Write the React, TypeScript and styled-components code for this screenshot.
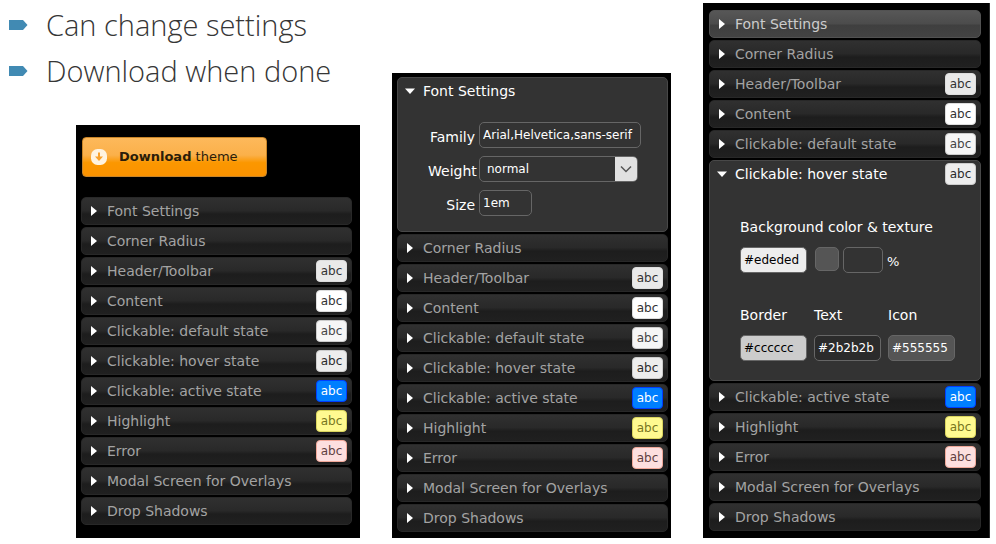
import React, { useState } from "react";
import styled, { createGlobalStyle } from "styled-components";

const GlobalStyle = createGlobalStyle`
  *, *::before, *::after { box-sizing: border-box; }
  body {
    margin: 0;
    background: #fff;
    font-family: "DejaVu Sans", Verdana, sans-serif;
    font-size: 14px;
  }
  button, input, select { font-family: inherit; }
`;

const Page = styled.main`
  display: grid;
  grid-template-columns: 360fr 279fr 287fr;
  column-gap: 32px;
  align-items: end;
  padding: 2px 6px 6px 0;
`;

const Column = styled.div`
  min-width: 0;
`;

const Bullets = styled.ul`
  list-style: none;
  margin: 0 0 31px;
  padding: 0 0 0 9px;
`;

const Bullet = styled.li`
  display: flex;
  align-items: center;
  gap: 18px;
  height: 46px;
  color: #363636;
  font-family: "Open Sans", "Century Gothic", sans-serif;
  font-size: 29px;
  font-weight: 350;
  line-height: 46px;
  white-space: nowrap;
`;

const Indented = styled.div`
  padding-left: 76px;
`;

const Panel = styled.section<{ $pad: string; $edge?: boolean }>`
  padding: ${(p) => p.$pad};
  background: #000;
  border-right: ${(p) => (p.$edge ? "1px solid #2a2a2a" : "0")};
`;

const DownloadButton = styled.button`
  display: flex;
  align-items: center;
  gap: 12px;
  min-width: 185px;
  height: 40px;
  margin: 0 0 20px 1px;
  padding: 0 20px 1px 8px;
  border: 1px solid #c98528;
  border-radius: 4px;
  background: linear-gradient(#fdb95b 0%, #fbb04a 45%, #fb9700 65%, #fb9200 100%);
  color: #2b1d0a;
  font-size: 13px;
  white-space: nowrap;
`;

const Sections = styled.div`
  display: flex;
  flex-direction: column;
  gap: 2px;
`;

const Section = styled.div<{ $open: boolean; $lit: boolean }>`
  border: 1px solid ${(p) => (p.$open ? "#484848" : p.$lit ? "#525252" : "#282828")};
  border-radius: 5px;
  background: ${(p) =>
    p.$open
      ? "#333"
      : p.$lit
        ? "linear-gradient(#575757 0%, #4c4c4c 48%, #3f3f3f 56%, #434343 100%)"
        : "linear-gradient(#303030 0%, #292929 48%, #1d1d1d 62%, #202020 100%)"};
  color: ${(p) => (p.$open ? "#fff" : p.$lit ? "#ccc" : "#a3a3a3")};
`;

const SectionHeader = styled.button`
  display: flex;
  align-items: center;
  gap: 5px;
  width: 100%;
  height: 26px;
  padding: 0 4px;
  border: 0;
  background: none;
  color: inherit;
  font-size: 14px;
  line-height: 20px;
  text-align: left;
  white-space: nowrap;
`;

const SectionTitle = styled.span`
  flex: 1;
`;

const Chip = styled.span<{ $bg: string; $fg: string; $line: string }>`
  width: 31px;
  height: 22px;
  border: 1px solid ${(p) => p.$line};
  border-radius: 4px;
  background: ${(p) => p.$bg};
  color: ${(p) => p.$fg};
  font-size: 12px;
  line-height: 20px;
  text-align: center;
`;

const FontForm = styled.div`
  display: grid;
  grid-template-columns: 51px 1fr;
  row-gap: 8px;
  padding: 18px 10px 15px 30px;
`;

const FieldLabel = styled.label`
  padding: 5px 4px 0 0;
  font-size: 14px;
  line-height: 20px;
  text-align: right;
  white-space: nowrap;
`;

const TextInput = styled.input<{ $w: number; $bg?: string; $fg?: string }>`
  width: ${(p) => p.$w}px;
  height: 26px;
  padding: 0 3px;
  border: 1px solid #666;
  border-radius: 5px;
  background: ${(p) => p.$bg ?? "#333"};
  color: ${(p) => p.$fg ?? "#fff"};
  font-size: 12px;
`;

const SelectBox = styled.div`
  position: relative;
  width: 159px;
  height: 26px;
`;

const Select = styled.select`
  appearance: none;
  width: 100%;
  height: 26px;
  padding: 0 26px 0 7px;
  border: 1px solid #666;
  border-radius: 5px;
  background: #333;
  color: #fff;
  font-size: 12px;
`;

const SelectArrow = styled.span`
  position: absolute;
  top: 1px;
  right: 1px;
  bottom: 1px;
  display: flex;
  align-items: center;
  justify-content: center;
  width: 22px;
  border-radius: 0 4px 4px 0;
  background: #e1e1e1;
  pointer-events: none;
`;

const StateForm = styled.div`
  display: flex;
  flex-direction: column;
  gap: 32px;
  padding: 30px 10px 19px 30px;
`;

const FieldGroup = styled.div`
  display: flex;
  flex-direction: column;
  gap: 10px;
`;

const GroupLabel = styled.label`
  font-size: 14px;
  line-height: 20px;
  white-space: nowrap;
`;

const Texture = styled.div`
  display: flex;
  gap: 4px;
`;

const TextureButton = styled.button`
  width: 24px;
  height: 24px;
  margin-left: 4px;
  padding: 0;
  border: 1px solid #666;
  border-radius: 5px;
  background: #555;
`;

const Percent = styled.span`
  padding-top: 4px;
  font-size: 13px;
  line-height: 22px;
`;

const ColorFields = styled.div`
  display: flex;
  gap: 7px;
`;

const BulletMark = () => (
  <svg width="19" height="10" viewBox="0 0 19 10" aria-hidden="true">
    <path d="M0 0H14L18.5 5L14 10H0Z" fill="#418ab3" />
  </svg>
);

const Arrow = ({ open }: { open: boolean }) => (
  <svg width="16" height="16" viewBox="0 0 16 16" aria-hidden="true">
    <path d={open ? "M3 5.5H13L8 11Z" : "M5 3L11 8L5 13Z"} fill="#fff" />
  </svg>
);

const DownloadIcon = () => (
  <svg width="16" height="16" viewBox="0 0 16 16" aria-hidden="true">
    <rect width="16" height="16" rx="6.5" fill="#fff3e0" />
    <path d="M7 3.5H9V7.5H12L8 12L4 7.5H7Z" fill="#f9a12c" />
  </svg>
);

type ChipColors = [bg: string, fg: string, line: string];

const sections: { title: string; chip?: ChipColors }[] = [
  { title: "Font Settings" },
  { title: "Corner Radius" },
  { title: "Header/Toolbar", chip: ["#e9e9e9", "#333", "#ddd"] },
  { title: "Content", chip: ["#fff", "#333", "#ddd"] },
  { title: "Clickable: default state", chip: ["#f6f6f6", "#454545", "#ccc"] },
  { title: "Clickable: hover state", chip: ["#ededed", "#2b2b2b", "#ccc"] },
  { title: "Clickable: active state", chip: ["#007fff", "#fff", "#003eff"] },
  { title: "Highlight", chip: ["#fffa90", "#777620", "#dad55e"] },
  { title: "Error", chip: ["#fddfdf", "#5f3f3f", "#f1a899"] },
  { title: "Modal Screen for Overlays" },
  { title: "Drop Shadows" },
];

const FontSettings = () => (
  <FontForm>
    <FieldLabel htmlFor="family">Family</FieldLabel>
    <TextInput id="family" $w={162} defaultValue="Arial,Helvetica,sans-serif" />
    <FieldLabel htmlFor="weight">Weight</FieldLabel>
    <SelectBox>
      <Select id="weight" defaultValue="normal">
        <option>normal</option>
        <option>bold</option>
      </Select>
      <SelectArrow>
        <svg width="12" height="8" viewBox="0 0 12 8" fill="none" aria-hidden="true">
          <path d="M1 1.5L6 6.5L11 1.5" stroke="#555" strokeWidth="1.5" />
        </svg>
      </SelectArrow>
    </SelectBox>
    <FieldLabel htmlFor="size">Size</FieldLabel>
    <TextInput id="size" $w={53} defaultValue="1em" />
  </FontForm>
);

const stateColors = [
  { label: "Border", value: "#cccccc", fg: "#000" },
  { label: "Text", value: "#2b2b2b", fg: "#fff" },
  { label: "Icon", value: "#555555", fg: "#fff" },
];

const StateSettings = () => (
  <StateForm>
    <FieldGroup>
      <GroupLabel htmlFor="bg-color">Background color &amp; texture</GroupLabel>
      <Texture>
        <TextInput id="bg-color" $w={67} $bg="#ededed" $fg="#000" defaultValue="#ededed" />
        <TextureButton type="button" aria-label="Texture" />
        <TextInput $w={40} aria-label="Texture opacity" />
        <Percent>%</Percent>
      </Texture>
    </FieldGroup>
    <ColorFields>
      {stateColors.map(({ label, value, fg }) => (
        <FieldGroup key={label}>
          <GroupLabel htmlFor={`color-${label}`}>{label}</GroupLabel>
          <TextInput id={`color-${label}`} $w={67} $bg={value} $fg={fg} defaultValue={value} />
        </FieldGroup>
      ))}
    </ColorFields>
  </StateForm>
);

const bodies: Record<string, React.FC> = {
  "Font Settings": FontSettings,
  "Clickable: hover state": StateSettings,
};

function Accordion({ initial = "", lit = "" }: { initial?: string; lit?: string }) {
  const [openTitle, setOpenTitle] = useState(initial);
  return (
    <Sections>
      {sections.map(({ title, chip }) => {
        const open = title === openTitle;
        const Body = bodies[title];
        return (
          <Section key={title} $open={open} $lit={title === lit}>
            <SectionHeader
              type="button"
              aria-expanded={open}
              onClick={() => setOpenTitle(open ? "" : title)}
            >
              <Arrow open={open} />
              <SectionTitle>{title}</SectionTitle>
              {chip && (
                <Chip $bg={chip[0]} $fg={chip[1]} $line={chip[2]}>
                  abc
                </Chip>
              )}
            </SectionHeader>
            {open && Body && <Body />}
          </Section>
        );
      })}
    </Sections>
  );
}

export default function App() {
  return (
    <>
      <GlobalStyle />
      <Page>
        <Column>
          <Bullets>
            <Bullet>
              <BulletMark />
              Can change settings
            </Bullet>
            <Bullet>
              <BulletMark />
              Download when done
            </Bullet>
          </Bullets>
          <Indented>
            <Panel $pad="12px 8px 13px 5px">
              <DownloadButton type="button">
                <DownloadIcon />
                <span>
                  <b>Download</b> theme
                </span>
              </DownloadButton>
              <Accordion />
            </Panel>
          </Indented>
        </Column>
        <Column>
          <Panel $pad="4px 3px 6px 5px">
            <Accordion initial="Font Settings" />
          </Panel>
        </Column>
        <Column>
          <Panel $pad="7px 8px 7px 6px" $edge>
            <Accordion initial="Clickable: hover state" lit="Font Settings" />
          </Panel>
        </Column>
      </Page>
    </>
  );
}
